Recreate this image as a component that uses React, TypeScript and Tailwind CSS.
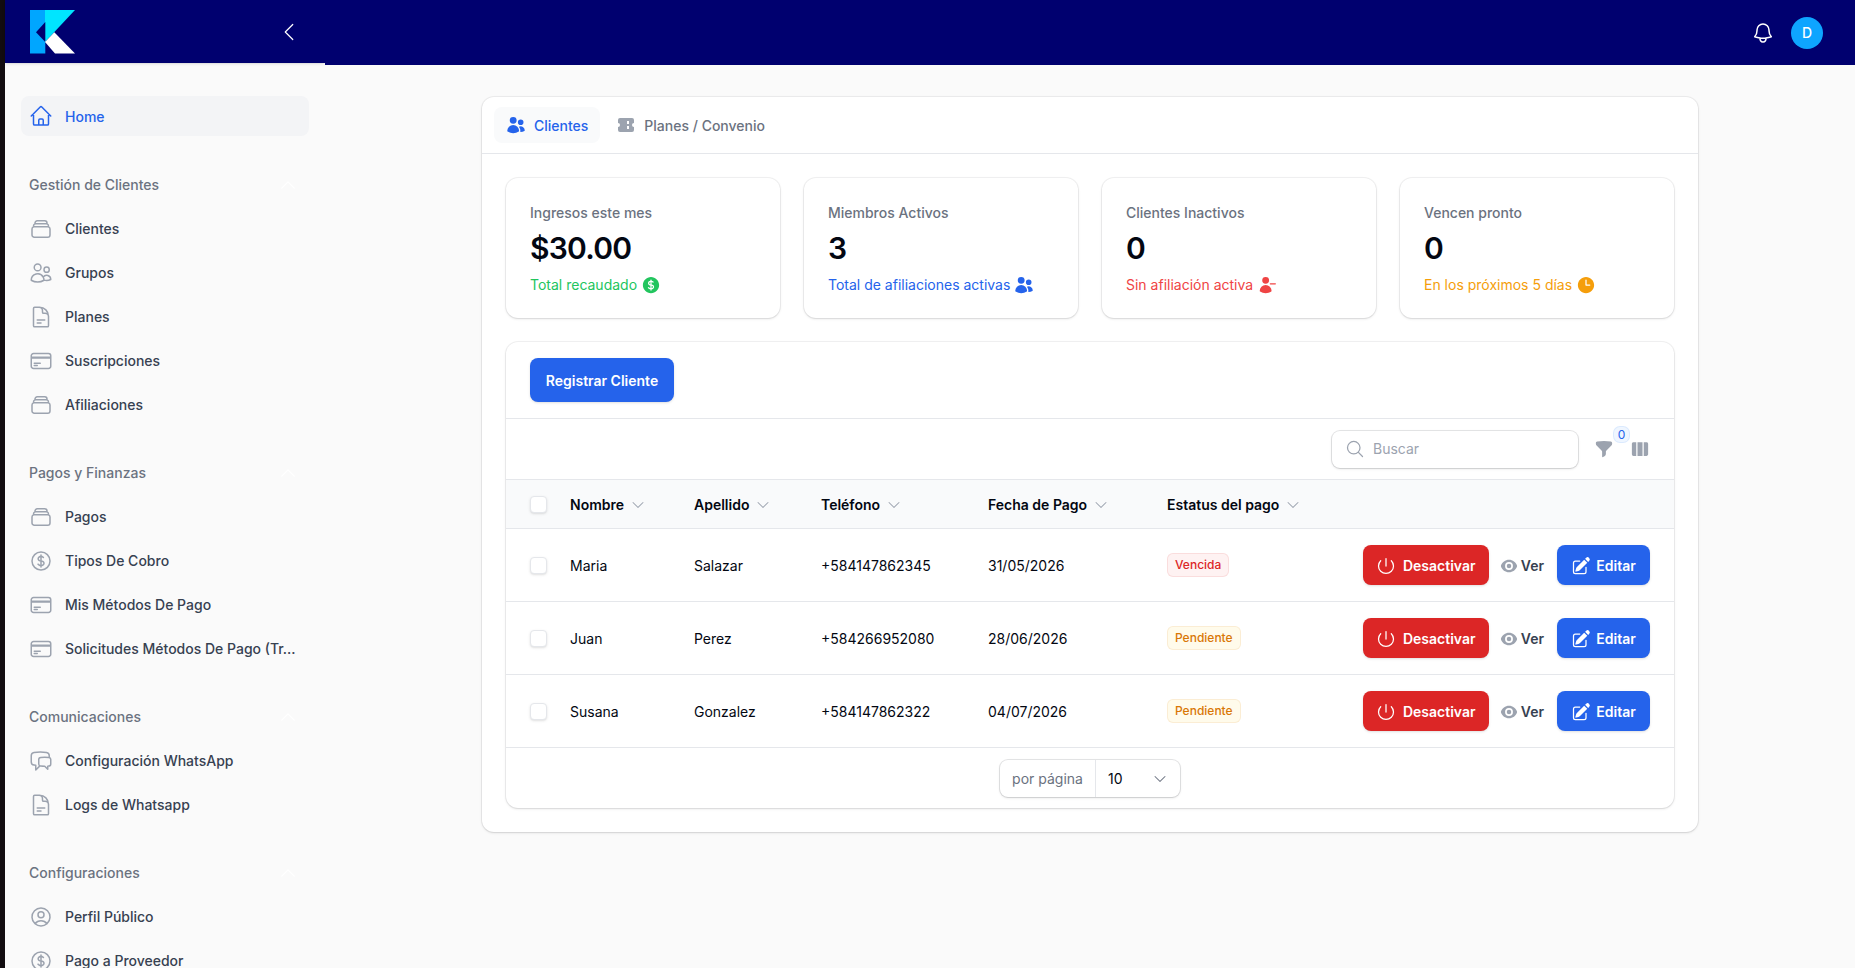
import { ReactNode } from "react";
import {
  HiOutlineHome,
  HiOutlineRectangleStack,
  HiOutlineUsers,
  HiOutlineDocumentText,
  HiOutlineCreditCard,
  HiOutlineCurrencyDollar,
  HiOutlineChatBubbleLeftRight,
  HiOutlineUserCircle,
  HiOutlineBell,
  HiOutlineChevronLeft,
  HiOutlineChevronUp,
  HiOutlineMagnifyingGlass,
  HiOutlinePower,
  HiUsers,
  HiCurrencyDollar,
  HiUserMinus,
  HiClock,
  HiFunnel,
  HiViewColumns,
  HiEye,
  HiPencilSquare,
  HiChevronDown,
} from "react-icons/hi2";

type NavItem = { label: string; icon: ReactNode };

const iconClass = "h-6 w-6 shrink-0 text-[#9ca3af]";

const groups: { title: string; items: NavItem[] }[] = [
  {
    title: "Gestión de Clientes",
    items: [
      { label: "Clientes", icon: <HiOutlineRectangleStack className={iconClass} /> },
      { label: "Grupos", icon: <HiOutlineUsers className={iconClass} /> },
      { label: "Planes", icon: <HiOutlineDocumentText className={iconClass} /> },
      { label: "Suscripciones", icon: <HiOutlineCreditCard className={iconClass} /> },
      { label: "Afiliaciones", icon: <HiOutlineRectangleStack className={iconClass} /> },
    ],
  },
  {
    title: "Pagos y Finanzas",
    items: [
      { label: "Pagos", icon: <HiOutlineRectangleStack className={iconClass} /> },
      { label: "Tipos De Cobro", icon: <HiOutlineCurrencyDollar className={iconClass} /> },
      { label: "Mis Métodos De Pago", icon: <HiOutlineCreditCard className={iconClass} /> },
      { label: "Solicitudes Métodos De Pago (Tr…", icon: <HiOutlineCreditCard className={iconClass} /> },
    ],
  },
  {
    title: "Comunicaciones",
    items: [
      { label: "Configuración WhatsApp", icon: <HiOutlineChatBubbleLeftRight className={iconClass} /> },
      { label: "Logs de Whatsapp", icon: <HiOutlineDocumentText className={iconClass} /> },
    ],
  },
  {
    title: "Configuraciones",
    items: [
      { label: "Perfil Público", icon: <HiOutlineUserCircle className={iconClass} /> },
      { label: "Pago a Proveedor", icon: <HiOutlineCurrencyDollar className={iconClass} /> },
    ],
  },
];

const stats = [
  { label: "Ingresos este mes", value: "$30.00", desc: "Total recaudado", color: "text-[#22c55e]", icon: <HiCurrencyDollar className="h-5 w-5" /> },
  { label: "Miembros Activos", value: "3", desc: "Total de afiliaciones activas", color: "text-[#2563eb]", icon: <HiUsers className="h-5 w-5" /> },
  { label: "Clientes Inactivos", value: "0", desc: "Sin afiliación activa", color: "text-[#ef4444]", icon: <HiUserMinus className="h-5 w-5" /> },
  { label: "Vencen pronto", value: "0", desc: "En los próximos 5 días", color: "text-[#f59e0b]", icon: <HiClock className="h-5 w-5" /> },
];

const rows = [
  { nombre: "Maria", apellido: "Salazar", tel: "+584147862345", fecha: "31/05/2026", estatus: "Vencida" },
  { nombre: "Juan", apellido: "Perez", tel: "+584266952080", fecha: "28/06/2026", estatus: "Pendiente" },
  { nombre: "Susana", apellido: "Gonzalez", tel: "+584147862322", fecha: "04/07/2026", estatus: "Pendiente" },
];

const columns = ["Nombre", "Apellido", "Teléfono", "Fecha de Pago", "Estatus del pago"];
const gridCols = "grid grid-cols-[64px_124px_127px_167px_179px_1fr] items-center";

function Logo() {
  return (
    <svg width="46" height="44" viewBox="30 10 46 44" className="shrink-0">
      <rect x="30" y="10" width="15.3" height="43.5" fill="#00a6ff" />
      <polygon points="45,10 75,10 45,42" fill="#00e5ff" />
      <polygon points="45.3,22 36,32.3 45.3,42" fill="#00006f" />
      <polygon points="45,42 54.3,32.3 75,53.5 55,53.5" fill="#ffffff" />
    </svg>
  );
}

function TicketIcon() {
  return (
    <svg viewBox="0 0 20 20" className="h-5 w-5 shrink-0">
      <path
        fill="#9ca3af"
        d="M2 5a2 2 0 012-2h12a2 2 0 012 2v3a2 2 0 100 4v3a2 2 0 01-2 2H4a2 2 0 01-2-2v-3a2 2 0 100-4V5z"
      />
      <rect x="11" y="6" width="2" height="3" fill="#ffffff" />
      <rect x="11" y="11" width="2" height="3" fill="#ffffff" />
    </svg>
  );
}

function Checkbox() {
  return <div className="h-[17px] w-[17px] rounded border border-[#e5e7eb] bg-white shadow-sm" />;
}

function Sidebar() {
  return (
    <aside className="flex w-[320px] shrink-0 flex-col">
      <div className="flex h-[63px] shrink-0 items-center justify-between bg-[#00006f] pl-[25px] pr-6 shadow-sm">
        <Logo />
        <HiOutlineChevronLeft className="h-6 w-6 text-white" strokeWidth={1.2} />
      </div>
      <nav className="flex flex-col px-4 pt-[33px]">
        <div className="mb-px flex h-10 items-center gap-3 rounded-lg bg-[#f3f4f6] px-2 text-sm font-medium text-[#2563eb]">
          <HiOutlineHome className="h-6 w-6 shrink-0" />
          <span className="pt-px">Home</span>
        </div>
        {groups.map((g) => (
          <div key={g.title} className="mt-7">
            <div className="flex h-10 items-center justify-between px-2 text-sm font-medium text-[#6b7280]">
              {g.title}
              <HiOutlineChevronUp className="mr-[3px] h-5 w-5 text-white" />
            </div>
            <div className="mt-1 flex flex-col gap-1">
              {g.items.map((item) => (
                <div key={item.label} className="flex h-10 items-center gap-3 px-2 text-sm font-medium text-[#374151]">
                  {item.icon}
                  <span className="whitespace-nowrap">{item.label}</span>
                </div>
              ))}
            </div>
          </div>
        ))}
      </nav>
    </aside>
  );
}

function StatusBadge({ value }: { value: string }) {
  const cls =
    value === "Vencida"
      ? "bg-[#fef2f2] text-[#dc2626] ring-[#dc2626]/10"
      : "bg-[#fffbeb] text-[#d97706] ring-[#d97706]/10";
  return (
    <span className={`inline-flex h-6 items-center rounded-md px-2 text-xs font-medium ring-1 ring-inset ${cls}`}>
      {value}
    </span>
  );
}

function ClientsTable() {
  return (
    <div className="mt-6 rounded-xl bg-white shadow-sm ring-1 ring-[#030712]/5">
      <div className="px-6 py-4">
        <button className="h-11 w-36 rounded-lg bg-[#2563eb] pt-0.5 text-sm font-semibold text-white shadow-sm">
          Registrar Cliente
        </button>
      </div>
      <div className="flex h-[61px] items-center justify-end gap-4 border-t border-[#e5e7eb] pr-6">
        <div className="flex h-[37px] w-[246px] items-center gap-2 rounded-lg bg-white px-[13px] text-sm text-[#9ca3af] shadow-sm ring-1 ring-[#030712]/10">
          <HiOutlineMagnifyingGlass className="h-5 w-5" />
          Buscar
        </div>
        <div className="relative">
          <HiFunnel className="h-5 w-5 text-[#9ca3af]" />
          <span className="absolute -top-3 left-5 flex h-[15px] w-[15px] items-center justify-center rounded-md bg-[#eff6ff] text-xs text-[#2563eb] ring-1 ring-[#dbeafe]">
            0
          </span>
        </div>
        <HiViewColumns className="h-5 w-5 text-[#9ca3af]" />
      </div>
      <div className={`${gridCols} h-[50px] border-y border-[#e5e7eb] bg-[#f9fafb]`}>
        <div className="pl-6">
          <Checkbox />
        </div>
        {columns.map((c) => (
          <div key={c} className="flex items-center gap-[6px] pt-px text-sm font-semibold text-[#030712]">
            {c}
            <HiChevronDown className="h-4 w-4 text-[#9ca3af]" />
          </div>
        ))}
      </div>
      {rows.map((r) => (
        <div key={r.nombre} className={`${gridCols} h-[73px] border-b border-[#e5e7eb] text-sm text-[#030712]`}>
          <div className="pl-6">
            <Checkbox />
          </div>
          <div className="pt-0.5">{r.nombre}</div>
          <div className="pt-0.5">{r.apellido}</div>
          <div className="pt-0.5">{r.tel}</div>
          <div className="pt-0.5">{r.fecha}</div>
          <div className="relative flex items-center">
            <StatusBadge value={r.estatus} />
            <div className="absolute right-6 flex items-center gap-3">
              <button className="flex h-10 w-[126px] items-center justify-center gap-[7px] rounded-lg bg-[#dc2626] pt-0.5 text-sm font-semibold text-white shadow-sm">
                <HiOutlinePower className="h-5 w-5" />
                Desactivar
              </button>
              <span className="-ml-px mr-px flex items-center gap-[3px] pt-0.5 text-sm font-semibold text-[#374151]">
                <HiEye className="h-[18px] w-[18px] text-[#9ca3af]" />
                Ver
              </span>
              <button className="flex h-10 w-[93px] items-center justify-center gap-[5px] rounded-lg bg-[#2563eb] pt-0.5 text-sm font-semibold text-white shadow-sm">
                <HiPencilSquare className="h-5 w-5" />
                Editar
              </button>
            </div>
          </div>
        </div>
      ))}
      <div className="flex h-[60px] items-center justify-center">
        <div className="flex h-[37px] w-[180px] items-stretch rounded-lg bg-white pt-px text-sm shadow-sm ring-1 ring-[#030712]/10">
          <div className="-mt-px flex w-[96px] items-center justify-center border-r border-[#e5e7eb] pt-0.5 text-[#6b7280]">por página</div>
          <div className="flex flex-1 items-center justify-between pl-3 pr-[12px] text-[#030712]">
            10
            <HiChevronDown className="h-4 w-4 text-[#6b7280]" />
          </div>
        </div>
      </div>
    </div>
  );
}

export default function App() {
  return (
    <div className="flex h-screen overflow-hidden bg-[#120c10] text-[#030712] [font-family:Inter,sans-serif]">
      <div className="w-[5px] shrink-0" />
      <div className="flex min-w-0 flex-1 bg-[#fafafa]">
        <Sidebar />
        <div className="flex min-w-0 flex-1 flex-col">
          <header className="flex h-[65px] shrink-0 items-center justify-end gap-4 bg-[#00006f] pr-8">
            <HiOutlineBell className="h-6 w-6 text-white" />
            <div className="flex h-8 w-8 items-center justify-center rounded-full bg-[#0ea5ff] text-sm font-medium text-white">D</div>
          </header>
          <main className="mx-auto mt-8 w-[1216px]">
            <div className="rounded-xl bg-white shadow-sm ring-1 ring-[#030712]/5">
              <div className="flex h-[57px] items-center gap-1 border-b border-[#e5e7eb] px-3">
                <div className="flex h-9 items-center gap-2 rounded-lg bg-[#f9fafb] px-3 text-sm font-medium text-[#2563eb]">
                  <HiUsers className="h-5 w-5" />
                  <span className="pt-0.5">Clientes</span>
                </div>
                <div className="flex h-9 items-center gap-2 px-3 text-sm font-medium text-[#6b7280]">
                  <TicketIcon />
                  <span className="pt-0.5">Planes / Convenio</span>
                </div>
              </div>
              <div className="p-6">
                <div className="grid grid-cols-4 gap-6">
                  {stats.map((s) => (
                    <div key={s.label} className="h-[140px] rounded-xl bg-white px-6 pt-[25px] shadow-sm ring-1 ring-[#030712]/5">
                      <div className="text-sm font-medium text-[#6b7280]">{s.label}</div>
                      <div className="mt-[7px] text-3xl font-semibold leading-9 tracking-tight text-[#030712]">{s.value}</div>
                      <div className={`mt-[9px] flex items-center gap-1 text-sm ${s.color}`}>
                        {s.desc}
                        {s.icon}
                      </div>
                    </div>
                  ))}
                </div>
                <ClientsTable />
              </div>
            </div>
          </main>
        </div>
      </div>
    </div>
  );
}
